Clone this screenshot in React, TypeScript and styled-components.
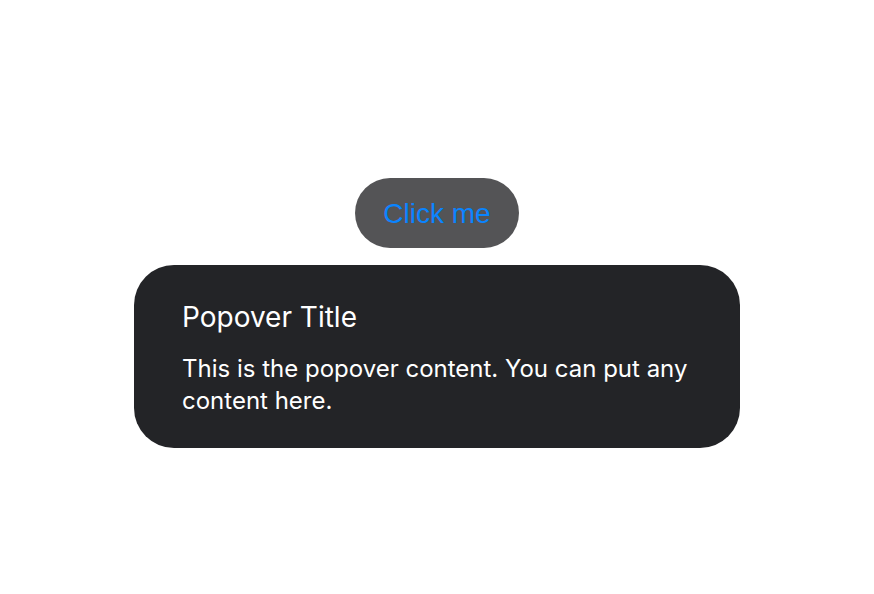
import React from "react";
import styled, { createGlobalStyle } from "styled-components";

const Global = createGlobalStyle`
  html, body { margin: 0; padding: 0; background: #ffffff; }
  body { font-family: Inter, "Noto Sans", sans-serif; }
`;

const Page = styled.div`
  width: 874px;
  height: 594px;
  display: flex;
  flex-direction: column;
  align-items: center;
  padding-top: 178px;
  box-sizing: border-box;
  gap: 17px;
`;

const Trigger = styled.button`
  height: 70px;
  padding: 2px 28px 0;
  border: none;
  border-radius: 35px;
  background: #545456;
  color: #0a84ff;
  font-family: "Liberation Sans", Arial, sans-serif;
  font-size: 28px;
  cursor: pointer;
`;

const Popover = styled.div`
  width: 606px;
  box-sizing: border-box;
  padding: 35px 48px 31px;
  background: #232427;
  border-radius: 40px;
  color: #ffffff;
  display: flex;
  flex-direction: column;
  gap: 19px;
`;

const Title = styled.h3`
  margin: 0;
  font-family: Inter, sans-serif;
  font-size: 28px;
  font-weight: 400;
  line-height: 34px;
`;

const Body = styled.p`
  margin: 0;
  font-family: Inter, sans-serif;
  font-size: 24px;
  line-height: 32px;
`;

export default function App() {
  return (
    <>
      <Global />
      <Page>
        <Trigger>Click me</Trigger>
        <Popover>
          <Title>Popover Title</Title>
          <Body>This is the popover content. You can put any content here.</Body>
        </Popover>
      </Page>
    </>
  );
}
